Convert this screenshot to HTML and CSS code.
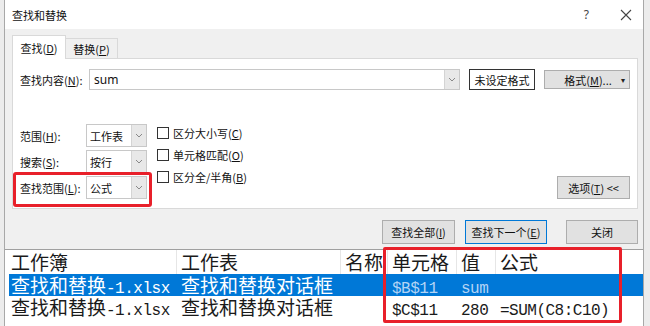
FILE: index.html
```html
<!DOCTYPE html>
<html lang="zh-CN">
<head>
    <meta charset="UTF-8">
    <title>查找和替换</title>
    <link rel="stylesheet" href="styles.css">
</head>
<body>
    <div class="dialog">
        <div class="titlebar">
            <span class="title">查找和替换</span>
            <span class="help">?</span>
            <svg class="close" width="12" height="12" viewBox="0 0 12 12"><path d="M1 1L11 11M11 1L1 11" stroke="#444" stroke-width="1.1" fill="none"/></svg>
        </div>

        <div class="body">
            <div class="tabs">
                <div class="tab active">查找(<u>D</u>)</div>
                <div class="tab">替换(<u>P</u>)</div>
            </div>

            <div class="panel">
                <div class="find-row">
                    <span class="label">查找内容(<u>N</u>):</span>
                    <div class="combo">
                        <span class="combo-text">sum</span>
                        <span class="arrow"><svg width="8" height="5" viewBox="0 0 8 5"><path d="M1 1L4 4L7 1" stroke="#888" fill="none"/></svg></span>
                    </div>
                    <div class="fmt-none">未设定格式</div>
                    <div class="btn fmt-btn"><span>格式(<u>M</u>)...</span><span class="caret">&#9662;</span></div>
                </div>

                <div class="opts">
                    <div class="selects">
                        <div class="sel-row">
                            <span class="sel-label">范围(<u>H</u>):</span>
                            <div class="select"><span>工作表</span><span class="arrow"><svg width="8" height="5" viewBox="0 0 8 5"><path d="M1 1L4 4L7 1" stroke="#888" fill="none"/></svg></span></div>
                        </div>
                        <div class="sel-row">
                            <span class="sel-label">搜索(<u>S</u>):</span>
                            <div class="select"><span>按行</span><span class="arrow"><svg width="8" height="5" viewBox="0 0 8 5"><path d="M1 1L4 4L7 1" stroke="#888" fill="none"/></svg></span></div>
                        </div>
                        <div class="sel-row marked">
                            <span class="sel-label">查找范围(<u>L</u>):</span>
                            <div class="select"><span>公式</span><span class="arrow"><svg width="8" height="5" viewBox="0 0 8 5"><path d="M1 1L4 4L7 1" stroke="#888" fill="none"/></svg></span></div>
                        </div>
                    </div>

                    <div class="checks">
                        <label class="check"><span class="box"></span>区分大小写(<u>C</u>)</label>
                        <label class="check"><span class="box"></span>单元格匹配(<u>O</u>)</label>
                        <label class="check"><span class="box"></span>区分全/半角(<u>B</u>)</label>
                    </div>

                    <div class="btn opt-btn">选项(<u>T</u>) &lt;&lt;</div>
                </div>
            </div>

            <div class="actions">
                <div class="btn act">查找全部(<u>I</u>)</div>
                <div class="btn act next">查找下一个(<u>E</u>)</div>
                <div class="btn act close-btn">关闭</div>
            </div>
        </div>

        <!-- results list -->
        <div class="results">
            <div class="row head">
                <div class="cell">工作簿</div>
                <div class="cell">工作表</div>
                <div class="cell">名称</div>
                <div class="cell">单元格</div>
                <div class="cell">值</div>
                <div class="cell">公式</div>
            </div>
            <div class="row sel">
                <div class="cell">查找和替换<span class="m">-1.xlsx</span></div>
                <div class="cell">查找和替换对话框</div>
                <div class="cell"></div>
                <div class="cell dim"><span class="m">$B$11</span></div>
                <div class="cell dim"><span class="m">sum</span></div>
                <div class="cell"></div>
            </div>
            <div class="row">
                <div class="cell">查找和替换<span class="m">-1.xlsx</span></div>
                <div class="cell">查找和替换对话框</div>
                <div class="cell"></div>
                <div class="cell"><span class="m">$C$11</span></div>
                <div class="cell"><span class="m">280</span></div>
                <div class="cell"><span class="m">=SUM(C8:C10)</span></div>
            </div>
            <div class="mark-box"></div>
        </div>
    </div>
</body>
</html>
```

FILE: styles.css
```css
* {
    margin: 0;
    padding: 0;
    box-sizing: border-box;
}
body {
    background: #ececec;
    font-family: "Noto Sans CJK SC", sans-serif;
    font-size: 11px;
    color: #111;
    width: 650px;
    height: 326px;
    overflow: hidden;
}
u {
    text-decoration: underline;
    text-underline-offset: 1px;
}
.dialog {
    margin-left: 4px;
    width: 640px;
    height: 326px;
    background: #f0f0f0;
    border-left: 1px solid #a8a8a8;
    border-right: 1px solid #a8a8a8;
    position: relative;
    overflow: hidden;
}
.titlebar {
    height: 29px;
    background: #fff;
    display: flex;
    align-items: center;
    padding-left: 7px;
    padding-right: 12px;
}
.title {
    font-size: 11px;
    flex: 1;
    padding-top: 1px;
}
.help {
    font-family: "Noto Sans", sans-serif;
    font-size: 12px;
    color: #444;
    margin-right: 31px;
}
.close {
    margin-right: -1px;
}

.body {
    padding: 6px 0 0 7px;
}
.tabs {
    display: flex;
    align-items: flex-end;
    height: 23px;
}
.tab {
    height: 20px;
    width: 52px;
    display: flex;
    align-items: center;
    justify-content: center;
    white-space: nowrap;
    border: 1px solid #d9d9d9;
    border-bottom: none;
    background: #f0f0f0;
}
.tab.active {
    height: 24px;
    width: 54px;
    background: #fff;
    margin-bottom: -1px;
    position: relative;
    z-index: 1;
}
.tab + .tab {
    border-left: none;
}
.panel {
    width: 626px;
    height: 151px;
    background: #fff;
    border: 1px solid #d9d9d9;
    padding: 10px 7px 0 7px;
}

.find-row {
    display: flex;
    align-items: center;
    height: 21px;
}
.label {
    width: 69px;
    white-space: nowrap;
}
.combo {
    width: 371px;
    height: 21px;
    border: 1px solid #c8c8c8;
    display: flex;
    align-items: center;
}
.combo-text {
    flex: 1;
    padding-left: 4px;
    font-family: "Noto Sans", sans-serif;
    font-size: 12px;
}
.arrow {
    width: 15px;
    align-self: stretch;
    display: flex;
    align-items: center;
    justify-content: center;
    background: #e8e8e8;
    border-left: 1px solid #d4d4d4;
}
.fmt-none {
    margin-left: 9px;
    width: 66px;
    height: 21px;
    border: 1px solid #333;
    display: flex;
    align-items: center;
    justify-content: center;
}
.btn {
    background: #e1e1e1;
    border: 1px solid #adadad;
    display: flex;
    align-items: center;
    justify-content: center;
    white-space: nowrap;
}
.fmt-btn {
    margin-left: 9px;
    width: 86px;
    height: 19px;
    position: relative;
}
.fmt-btn span:first-child {
    margin-left: 2px;
}
.caret {
    position: absolute;
    right: 4px;
    font-size: 8px;
    color: #222;
}

.opts {
    display: flex;
    margin-top: 34px;
}
.selects {
    display: flex;
    flex-direction: column;
    gap: 3px;
}
.sel-row {
    display: flex;
    align-items: center;
    position: relative;
}
.sel-label {
    width: 66px;
    white-space: nowrap;
}
.select {
    width: 61px;
    height: 23px;
    border: 1px solid #c8c8c8;
    display: flex;
    align-items: center;
    background: #fff;
}
.select span:first-child {
    flex: 1;
    padding-left: 3px;
}
.sel-row.marked::before {
    content: "";
    position: absolute;
    left: -7px;
    right: -5px;
    top: -4px;
    bottom: -8px;
    border: 3px solid #e8202a;
    border-radius: 3px;
}

.checks {
    margin-left: 10px;
    margin-top: -2px;
    display: flex;
    flex-direction: column;
}
.check {
    height: 22px;
    display: flex;
    align-items: center;
    white-space: nowrap;
}
.box {
    width: 12px;
    height: 12px;
    border: 1px solid #333;
    background: #fff;
    margin-right: 4px;
}
.opt-btn {
    margin-left: auto;
    align-self: flex-end;
    width: 73px;
    height: 23px;
}

.actions {
    display: flex;
    width: 626px;
    justify-content: flex-end;
    margin-top: 11px;
    height: 24px;
}
.act {
    height: 24px;
}
.act:nth-child(1) {
    width: 73px;
}
.next {
    width: 82px;
    margin-left: 10px;
    border-color: #0078d7;
}
.close-btn {
    width: 72px;
    margin-left: 19px;
}

.results {
    margin-top: 5px;
    height: 80px;
    background: #fff;
    border-top: 1px solid #a0a0a0;
    position: relative;
    font-size: 19px;
    color: #1a1a1a;
}
.row {
    display: grid;
    grid-template-columns: 172px 164px 47px 69px 39px 1fr;
    height: 22px;
    align-items: center;
    white-space: nowrap;
    line-height: 22px;
}
.row.head {
    height: 24px;
    line-height: 24px;
}
.cell {
    padding-left: 4px;
    height: 100%;
}
.row .cell:first-child {
    padding-left: 6px;
}
.head .cell {
    border-right: 1px solid #e6e6e6;
}
.head .cell:last-child {
    border-right: none;
}
.row.sel {
    margin-left: 4px;
    grid-template-columns: 168px 164px 47px 69px 39px 1fr;
    background: #0078d7;
    color: #fff;
}
.row.sel .cell:first-child {
    padding-left: 2px;
}
.row.sel .dim {
    color: #b3d4f5;
}
.m {
    font-family: "Liberation Mono", monospace;
    font-size: 16px;
    letter-spacing: -0.5px;
}
.mark-box {
    position: absolute;
    left: 378px;
    top: -3px;
    width: 239px;
    height: 76px;
    border: 3px solid #e8202a;
    border-radius: 2px;
}
```
